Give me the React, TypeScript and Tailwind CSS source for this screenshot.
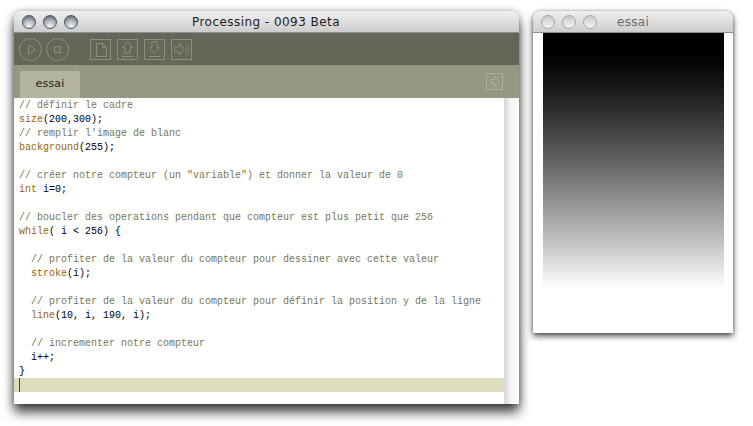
import React from "react";

const mono = "font-['Liberation_Mono',monospace]";

type Seg = { t: string; c?: "k" | "c" };

const lines: Seg[][] = [
  [{ t: "// définir le cadre", c: "c" }],
  [{ t: "size", c: "k" }, { t: "(200,300);" }],
  [{ t: "// remplir l'image de blanc", c: "c" }],
  [{ t: "background", c: "k" }, { t: "(255);" }],
  [],
  [{ t: "// créer notre compteur (un \"variable\") et donner la valeur de 0", c: "c" }],
  [{ t: "int", c: "k" }, { t: " i=0;" }],
  [],
  [{ t: "// boucler des operations pendant que compteur est plus petit que 256", c: "c" }],
  [{ t: "while", c: "k" }, { t: "( i < 256) {" }],
  [],
  [{ t: "  // profiter de la valeur du compteur pour dessiner avec cette valeur", c: "c" }],
  [{ t: "  " }, { t: "stroke", c: "k" }, { t: "(i);" }],
  [],
  [{ t: "  // profiter de la valeur du compteur pour définir la position y de la ligne", c: "c" }],
  [{ t: "  " }, { t: "line", c: "k" }, { t: "(10, i, 190, i);" }],
  [],
  [{ t: "  // incrementer notre compteur", c: "c" }],
  [{ t: "  i++;" }],
  [{ t: "}" }],
];

const Light = ({ dim }: { dim?: boolean }) => (
  <span
    className={
      dim
        ? "w-[14px] h-[14px] rounded-full border border-[#a4a4a4] bg-gradient-to-b from-[#c8c8c8] to-[#f4f4f4]"
        : "w-[14px] h-[14px] rounded-full border border-[#4e545e] bg-[radial-gradient(circle_at_50%_85%,#f2f4f6_0%,#b4bac2_45%,#6a717c_85%)]"
    }
  />
);

const TitleBar = ({ title, dim }: { title: string; dim?: boolean }) => (
  <div className="relative flex h-[22px] items-center gap-[7px] rounded-t-[8px] border-b border-[#8f8f8f] bg-gradient-to-b from-[#f0f0f0] to-[#cdcdcd] pl-[8px]">
    <Light dim={dim} />
    <Light dim={dim} />
    <Light dim={dim} />
    <span
      className={
        dim
          ? "ml-[13px] font-['DejaVu_Sans',sans-serif] text-[12px] tracking-[0.3px] text-[#6a6a6a]"
          : "absolute inset-x-0 pr-[1px] text-center font-['DejaVu_Sans',sans-serif] text-[12px] tracking-[0.45px] text-[#1c1c1c]"
      }
    >
      {title}
    </span>
  </div>
);

const ToolIcon = ({ children }: { children: React.ReactNode }) => (
  <svg width="21" height="21" viewBox="0 0 21 21" fill="none" stroke="#8e8f79" strokeWidth="1">
    <rect x="0.5" y="0.5" width="20" height="20" />
    {children}
  </svg>
);

const RoundIcon = ({ children }: { children: React.ReactNode }) => (
  <svg width="23" height="23" viewBox="0 0 23 23" fill="none" stroke="#8e8f79" strokeWidth="1">
    <circle cx="11.5" cy="11.5" r="11" />
    {children}
  </svg>
);

const Toolbar = () => (
  <div className="flex h-[32px] items-center bg-[#666658] pl-[5px]">
    <div className="flex gap-[4px]">
      <RoundIcon>
        <path d="M9.5 7 L17 11.5 L9.5 16 Z" />
      </RoundIcon>
      <RoundIcon>
        <rect x="8.5" y="8.5" width="6" height="6" />
      </RoundIcon>
    </div>
    <div className="ml-[21px] flex gap-[6px]">
      <ToolIcon>
        <path d="M6.5 4.5 H12.5 L16.5 8.5 V17.5 H6.5 Z M12.5 4.5 V8.5 H16.5" />
      </ToolIcon>
      <ToolIcon>
        <path d="M10.5 2.5 L15.5 8.5 H13 V14 H8 V8.5 H5.5 Z M5 17.5 H16" />
      </ToolIcon>
      <ToolIcon>
        <path d="M8 2.5 H13 V8.5 H15.5 L10.5 14 L5.5 8.5 H8 Z M5 17.5 H16" />
      </ToolIcon>
      <ToolIcon>
        <path d="M3.5 8 H8.5 V4 L13.5 10.5 L8.5 16 V13 H3.5 Z" />
        <path d="M15.5 5 V16 M17.5 5 V16" strokeDasharray="1 1" />
      </ToolIcon>
    </div>
  </div>
);

const TabBar = () => (
  <div className="flex h-[33px] items-end justify-between bg-[#979883] pl-[6px] pr-[16px]">
    <div className="flex h-[27px] w-[60px] items-center justify-center rounded-t-[2px] bg-[#b4b59f] font-['DejaVu_Sans',sans-serif] text-[11px] tracking-[0.2px] text-[#23231a]">
      essai
    </div>
    <svg className="mb-[8px]" width="17" height="17" viewBox="0 0 17 17" fill="none" stroke="#b0b19b" strokeWidth="1">
      <rect x="0.5" y="0.5" width="16" height="16" />
      <path d="M4.5 6.5 H8.5 V3.5 L13.5 8.5 L8.5 13.5 V10.5 H4.5 Z" />
    </svg>
  </div>
);

const CodeLine = ({ segs }: { segs: Seg[] }) => (
  <div className="h-[14px] whitespace-pre leading-[16px]">
    {segs.map((s, i) => (
      <span
        key={i}
        className={s.c === "k" ? "text-[#996600]" : s.c === "c" ? "text-[#777755]" : "text-black"}
      >
        {s.t}
      </span>
    ))}
  </div>
);

const Editor = () => (
  <div className="flex h-[306px] bg-white">
    <div className={`relative flex-1 ${mono} text-[10px]`}>
      <div className="pl-[5px]">
        {lines.map((l, i) => (
          <CodeLine key={i} segs={l} />
        ))}
      </div>
      <div className="h-[14px] bg-[#ddddbb] pl-[5px]">
        <div className="h-[14px] w-px bg-[#4a4a20]" />
      </div>
    </div>
    <div className="w-[15px] bg-gradient-to-r from-[#d6d6d6] via-[#f6f6f6] to-[#fdfdfd]" />
  </div>
);

export default function App() {
  return (
    <div className="flex h-[426px] w-[753px] items-start gap-[14px] overflow-hidden bg-white pl-[14px] pt-[11px]">
      <div className="w-[505px] rounded-t-[8px] shadow-[0_8px_12px_rgba(0,0,0,0.75),0_0_6px_rgba(0,0,0,0.3)]">
        <TitleBar title="Processing - 0093 Beta" />
        <Toolbar />
        <TabBar />
        <Editor />
      </div>
      <div className="w-[200px] rounded-t-[8px] bg-white shadow-[0_3px_6px_rgba(0,0,0,0.7),0_0_3px_rgba(0,0,0,0.3)]">
        <TitleBar title="essai" dim />
        <div className="h-[300px] pl-[10px]">
          <div className="h-[256px] w-[181px] bg-gradient-to-b from-black to-white" />
        </div>
      </div>
    </div>
  );
}
